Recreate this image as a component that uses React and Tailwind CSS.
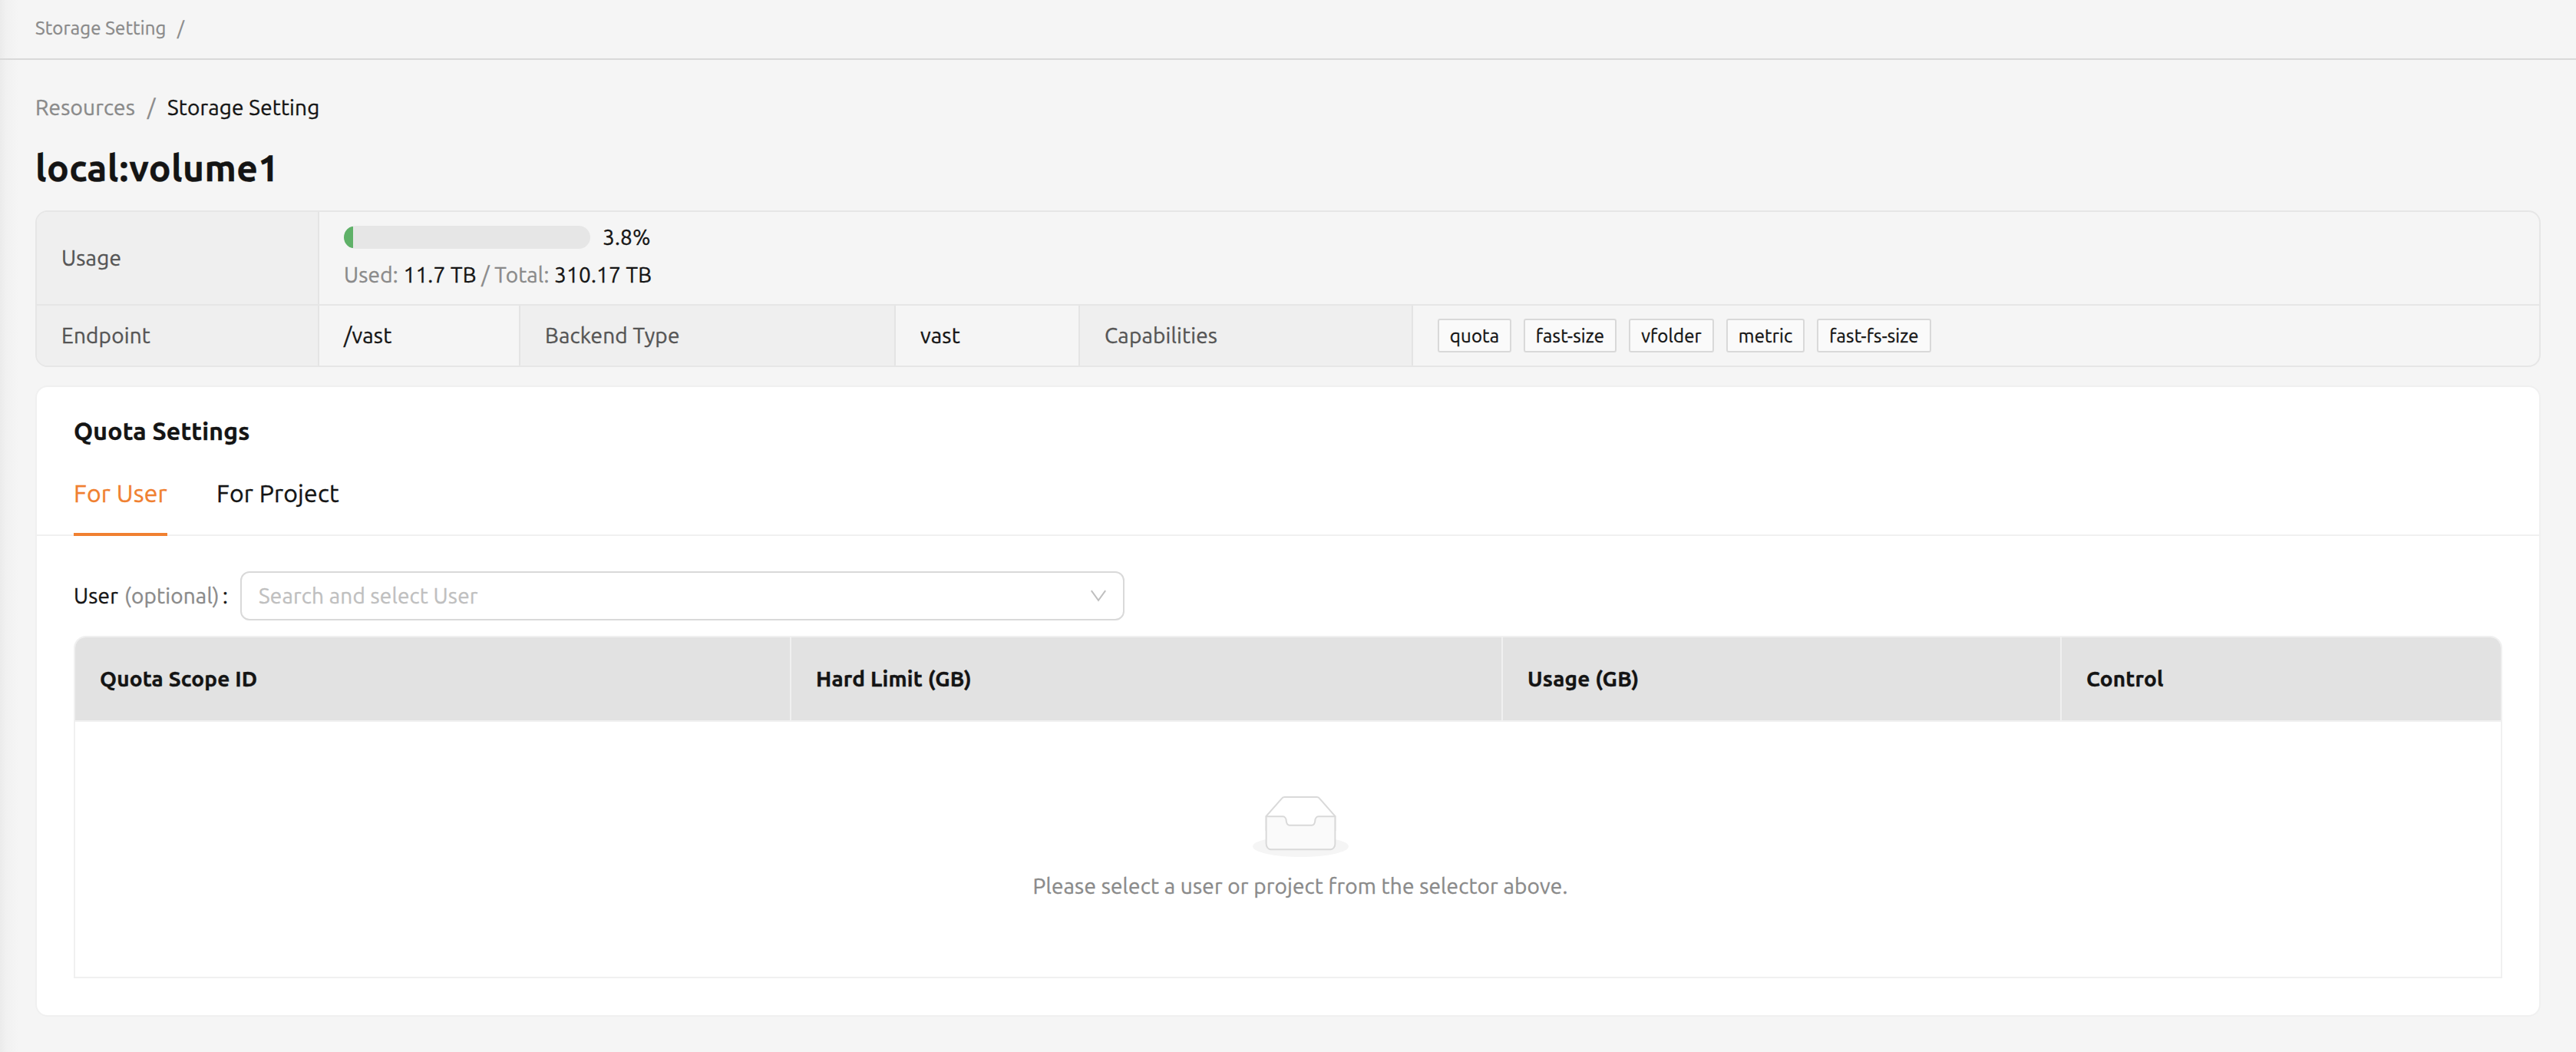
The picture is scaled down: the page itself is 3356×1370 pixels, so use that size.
import clsx from 'clsx'

const CAPABILITIES = [
  { name: 'quota', width: 'w-[96px]' },
  { name: 'fast-size', width: 'w-[121px]' },
  { name: 'vfolder', width: 'w-[111px]' },
  { name: 'metric', width: 'w-[102px]' },
  { name: 'fast-fs-size', width: 'w-[149px]' },
]

const COLUMNS = [
  { title: 'Quota Scope ID', width: 'w-[933px]' },
  { title: 'Hard Limit (GB)', width: 'w-[927px]' },
  { title: 'Usage (GB)', width: 'w-[728px]' },
  { title: 'Control', width: 'flex-1' },
]

function Label({ className, children }) {
  return (
    <div className={clsx('flex shrink-0 items-center border-r-2 border-[#e4e4e4] bg-[#efefef] pl-8 text-[#555555]', className)}>
      {children}
    </div>
  )
}

function EmptyIcon() {
  return (
    <svg width="125" height="80" viewBox="0 0 64 41">
      <g transform="translate(0 1)" fill="none" fillRule="evenodd">
        <ellipse fill="#f5f5f5" cx="32" cy="33" rx="32" ry="7" />
        <g fillRule="nonzero" stroke="#d9d9d9">
          <path d="M55 12.76L44.854 1.258C44.367.474 43.656 0 42.907 0H21.093c-.749 0-1.46.474-1.947 1.257L9 12.761V22h46v-9.24z" />
          <path
            d="M41.613 15.931c0-1.605.994-2.93 2.227-2.931H55v18.137C55 33.26 53.68 35 52.05 35h-40.1C10.32 35 9 33.259 9 31.137V13h11.16c1.233 0 2.227 1.323 2.227 2.928v.022c0 1.605 1.005 2.901 2.237 2.901h14.752c1.232 0 2.237-1.308 2.237-2.913v-.007z"
            fill="#fafafa"
          />
        </g>
      </g>
    </svg>
  )
}

function VolumeInfo() {
  return (
    <div className="mt-[26px] overflow-hidden rounded-2xl border-2 border-[#e6e6e6]">
      <div className="flex h-[122px] border-b-2 border-[#e6e6e6]">
        <Label className="w-[368px]">Usage</Label>
        <div className="pl-8 pt-[18px]">
          <div className="flex h-[30px] items-center">
            <div className="flex h-[30px] w-[321px] items-center overflow-hidden rounded-full bg-[#e6e6e6]">
              <div className="h-7 w-3 rounded-l-full bg-[#5fb168]" />
            </div>
            <span className="ml-4">3.8%</span>
          </div>
          <div className="mt-3 flex h-[44px] items-center whitespace-pre">
            <span className="text-[#8a8a8a]">Used: </span>
            <span>11.7 TB</span>
            <span className="text-[#8a8a8a]"> / Total: </span>
            <span>310.17 TB</span>
          </div>
        </div>
      </div>
      <div className="flex h-[78px]">
        <Label className="w-[368px]">Endpoint</Label>
        <div className="flex w-[262px] items-center border-r-2 border-[#e4e4e4] pl-8">/vast</div>
        <Label className="w-[489px]">Backend Type</Label>
        <div className="flex w-[240px] items-center border-r-2 border-[#e4e4e4] pl-8">vast</div>
        <Label className="w-[434px]">Capabilities</Label>
        <div className="flex items-center gap-4 pl-8">
          {CAPABILITIES.map((c) => (
            <span
              key={c.name}
              className={clsx('flex h-[44px] items-center justify-center rounded-[3px] border-2 border-[#d9d9d9] bg-[#fafafa] pt-0.5 text-2xl', c.width)}
            >
              {c.name}
            </span>
          ))}
        </div>
      </div>
    </div>
  )
}

function QuotaTable() {
  return (
    <div className="mt-5 rounded-t-2xl border-2 border-[#f0f0f0]">
      <div className="flex h-[110px] overflow-hidden rounded-t-[14px] border-b-2 border-[#f0f0f0] bg-[#e2e2e2] font-bold">
        {COLUMNS.map((col) => (
          <div key={col.title} className={clsx('flex items-center border-r-2 border-[#f0f0f0] pl-8 last:border-r-0', col.width)}>
            {col.title}
          </div>
        ))}
      </div>
      <div className="flex h-[332px] flex-col items-center pl-8 pt-[96px]">
        <EmptyIcon />
        <p className="mt-4 leading-[44px] text-[#8a8a8a]">Please select a user or project from the selector above.</p>
      </div>
    </div>
  )
}

function QuotaSettings() {
  return (
    <div className="mt-6 h-[822px] rounded-2xl border-2 border-[#f0f0f0] bg-white">
      <h2 className="flex h-[112px] items-center px-12 pt-0.5 text-[32px] font-bold">Quota Settings</h2>
      <div className="flex h-[82px] border-b-2 border-[#f0f0f0] px-12 text-[32px] leading-[52px]">
        <button className="h-[82px] w-[122px] border-b-4 border-[#f08030] pb-[26px] text-left whitespace-nowrap text-[#f08030]">For User</button>
        <button className="ml-16 h-[52px]">For Project</button>
      </div>
      <div className="px-12 pt-[46px]">
        <div className="flex h-16 items-center">
          <span className="w-[66px]">User</span>
          <span className="w-[128px] text-[#8a8a8a]">(optional)</span>
          <span className="w-[23px]">:</span>
          <div className="flex h-16 w-[1152px] items-center justify-between rounded-xl border-2 border-[#d9d9d9] pl-[22px] pr-[21px]">
            <span className="text-[#bfbfbf]">Search and select User</span>
            <svg width="22" height="18" viewBox="0 0 22 18" fill="none" stroke="#bfbfbf" strokeWidth="2">
              <path d="M1.8 2.2L11 14.8L20.2 2.2" />
            </svg>
          </div>
        </div>
        <QuotaTable />
      </div>
    </div>
  )
}

export default function App() {
  return (
    <div className="h-[1370px] w-full overflow-hidden bg-[#f5f5f5] bg-[linear-gradient(to_right,#ebebeb,#f1f1f1_8px,#f5f5f5_24px)] font-['Ubuntu','Noto_Sans',sans-serif] text-[28px] tracking-[0.006em] text-[#141414] [-webkit-text-stroke-width:0.35px]">
      <header className="flex h-[78px] items-center border-b-2 border-[#d9d9d9] pb-0.5 pl-[46px] text-2xl text-[#8a8a8a]">
        <span className="w-[185px]">Storage Setting</span>
        <span>/</span>
      </header>
      <main className="px-[46px]">
        <nav className="mt-10 flex h-[44px] items-center">
          <span className="w-[146px] text-[#8a8a8a]">Resources</span>
          <span className="w-[26px] text-[#8a8a8a]">/</span>
          <span>Storage Setting</span>
        </nav>
        <h1 className="mt-[26px] text-5xl leading-[60px] font-bold tracking-[0.4px]">local:volume1</h1>
        <VolumeInfo />
        <QuotaSettings />
      </main>
    </div>
  )
}
